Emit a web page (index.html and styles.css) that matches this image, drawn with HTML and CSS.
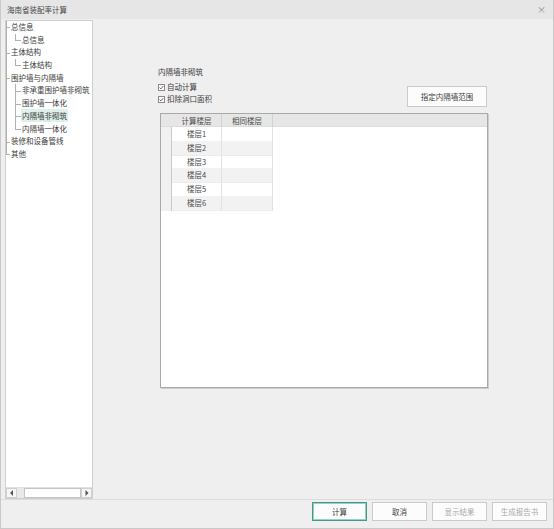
FILE: index.html
```html
<!DOCTYPE html>
<html lang="zh">
<head>
<meta charset="utf-8">
<title>海南省装配率计算</title>
<link rel="stylesheet" href="styles.css">
</head>
<body>
<div class="window">
  <div class="titlebar">
    <span class="title">海南省装配率计算</span>
    <span class="close">×</span>
  </div>
  <div class="content">
    <div class="tree">
      <div class="tree-items">
        <div class="node root">总信息</div>
        <div class="node child last">总信息</div>
        <div class="node root">主体结构</div>
        <div class="node child last">主体结构</div>
        <div class="node root">围护墙与内隔墙</div>
        <div class="node child">非承重围护墙非砌筑</div>
        <div class="node child">围护墙一体化</div>
        <div class="node child"><span class="sel">内隔墙非砌筑</span></div>
        <div class="node child last">内隔墙一体化</div>
        <div class="node root">装修和设备管线</div>
        <div class="node root last">其他</div>
      </div>
      <div class="hscroll">
        <div class="sbtn"><svg width="4" height="6" viewBox="0 0 4 6"><path d="M3 0 L0 3 L3 6 Z" fill="#555"/></svg></div>
        <div class="strack"><div class="sthumb"></div></div>
        <div class="sbtn"><svg width="4" height="6" viewBox="0 0 4 6"><path d="M0.5 0 L3.5 3 L0.5 6 Z" fill="#555"/></svg></div>
      </div>
    </div>
    <div class="pane">
      <div class="group-title">内隔墙非砌筑</div>
      <div class="opts-row">
        <div class="checks">
          <label class="check"><svg class="cb" width="7" height="7" viewBox="0 0 7 7"><rect x="0.5" y="0.5" width="6" height="6" fill="#fff" stroke="#8a8a8a"/><path d="M1.6 3.6 L2.9 4.9 L5.4 2" fill="none" stroke="#444" stroke-width="0.8"/></svg>自动计算</label>
          <label class="check"><svg class="cb" width="7" height="7" viewBox="0 0 7 7"><rect x="0.5" y="0.5" width="6" height="6" fill="#fff" stroke="#8a8a8a"/><path d="M1.6 3.6 L2.9 4.9 L5.4 2" fill="none" stroke="#444" stroke-width="0.8"/></svg>扣除洞口面积</label>
        </div>
        <button class="btn btn-range">指定内隔墙范围</button>
      </div>
      <div class="grid">
        <div class="grow ghead">
          <div class="rh"></div>
          <div class="gc">计算楼层</div>
          <div class="gc">相同楼层</div>
        </div>
        <div class="grow"><div class="rh"></div><div class="gc">楼层1</div><div class="gc"></div></div>
        <div class="grow alt"><div class="rh"></div><div class="gc">楼层2</div><div class="gc"></div></div>
        <div class="grow"><div class="rh"></div><div class="gc">楼层3</div><div class="gc"></div></div>
        <div class="grow alt"><div class="rh"></div><div class="gc">楼层4</div><div class="gc"></div></div>
        <div class="grow"><div class="rh"></div><div class="gc">楼层5</div><div class="gc"></div></div>
        <div class="grow alt"><div class="rh"></div><div class="gc">楼层6</div><div class="gc"></div></div>
      </div>
    </div>
  </div>
  <div class="footer">
    <button class="btn primary">计算</button>
    <button class="btn">取消</button>
    <button class="btn disabled">显示结果</button>
    <button class="btn disabled">生成报告书</button>
  </div>
</div>
</body>
</html>
```

FILE: styles.css
```css
* { box-sizing: border-box; }
html, body { margin: 0; padding: 0; }
body {
  width: 554px;
  height: 529px;
  background: #efefef;
  font-family: "Noto Sans CJK SC", "Noto Sans", sans-serif;
  font-size: 7.5px;
  color: #3c3c3c;
}
.window {
  width: 554px;
  height: 529px;
  border: 1px solid #c9c9c9;
  border-top: none;
  display: flex;
  flex-direction: column;
  background: #efefef;
}
.titlebar {
  height: 19px;
  background: #e6e6e6;
  display: flex;
  align-items: center;
  justify-content: space-between;
  padding: 0 6px 0 6px;
  color: #4a4a4a;
  flex: none;
}
.close { font-size: 9px; color: #8a8a8a; margin-right: 1px; }
.content {
  flex: 1;
  display: flex;
  min-height: 0;
}
.tree {
  width: 88px;
  margin: 1px 0 0 4px;
  border: 1px solid #cfcfcf;
  background: #fff;
  display: flex;
  flex-direction: column;
}
.tree-items { flex: 1; }
.node {
  height: 12.7px;
  line-height: 12.7px;
  white-space: nowrap;
}
.node.root {
  padding-left: 5px;
  background:
    linear-gradient(#b0b0b0, #b0b0b0) 0 0 / 1px 100% no-repeat,
    linear-gradient(#b0b0b0, #b0b0b0) 0 55% / 4px 1px no-repeat;
}
.node.root.last {
  background:
    linear-gradient(#b0b0b0, #b0b0b0) 0 0 / 1px 55% no-repeat,
    linear-gradient(#b0b0b0, #b0b0b0) 0 55% / 4px 1px no-repeat;
}
.node.child {
  padding-left: 16px;
  background:
    linear-gradient(#b0b0b0, #b0b0b0) 0 0 / 1px 100% no-repeat,
    linear-gradient(#b0b0b0, #b0b0b0) 9px 0 / 1px 100% no-repeat,
    linear-gradient(#b0b0b0, #b0b0b0) 9px 55% / 6px 1px no-repeat;
}
.node.child.last {
  background:
    linear-gradient(#b0b0b0, #b0b0b0) 0 0 / 1px 100% no-repeat,
    linear-gradient(#b0b0b0, #b0b0b0) 9px 0 / 1px 55% no-repeat,
    linear-gradient(#b0b0b0, #b0b0b0) 9px 55% / 6px 1px no-repeat;
}
.sel {
  background: #def0ea;
  padding: 1px 1px;
  margin-left: -1px;
}
.hscroll {
  height: 11px;
  display: flex;
  background: #e9e9e9;
  border-top: 1px solid #e2e2e2;
}
.sbtn {
  width: 11px;
  background: #f6f6f6;
  border: 1px solid #cfcfcf;
  display: flex;
  align-items: center;
  justify-content: center;
}
.strack {
  flex: 1;
  padding-left: 7px;
  display: flex;
}
.sthumb {
  width: 57px;
  background: #fff;
  border: 1px solid #c4c4c4;
}
.pane {
  flex: 1;
  padding: 47px 65px 0 65px;
  display: flex;
  flex-direction: column;
}
.group-title {
  line-height: 12px;
  margin-bottom: 3px;
}
.opts-row {
  display: flex;
  justify-content: space-between;
  align-items: flex-start;
}
.checks { display: flex; flex-direction: column; }
.check {
  height: 12px;
  line-height: 12px;
  display: flex;
  align-items: center;
  white-space: nowrap;
}
.cb { margin-right: 2px; flex: none; }
.btn {
  font-family: inherit;
  font-size: 7.5px;
  color: #3c3c3c;
  background: #fcfcfc;
  border: 1px solid #cacaca;
  padding: 0;
  margin: 0;
  width: 55px;
  height: 19px;
}
.btn-range {
  width: 80px;
  height: 21px;
  margin-top: 5px;
  margin-right: 1px;
}
.grid {
  margin-top: 6px;
  margin-left: 2px;
  height: 275px;
  background: #fff;
  border: 1px solid #a9a9a9;
  box-shadow: 1px 1px 0 #cdcdcd;
}
.grow {
  display: grid;
  grid-template-columns: 11px 50px 51px;
  height: 13.8px;
  line-height: 13.8px;
  text-align: center;
}
.grow.ghead {
  height: 13px;
  line-height: 13px;
  background: #e6e6e6;
  border-bottom: 1px solid #dcdcdc;
}
.grow .rh {
  background: #f1f1f1;
  border-right: 1px solid #c9c9c9;
}
.grow.ghead .rh { background: transparent; border-right: none; }
.grow .gc {
  border-right: 1px solid #e2e2e2;
  border-bottom: 1px solid #ececec;
  color: #4a4a4a;
}
.grow.ghead .gc { border-right: 1px solid #d2d2d2; border-bottom: none; }
.grow.alt .gc { background: #f2f2f2; }
.footer {
  height: 29px;
  flex: none;
  border-top: 1px solid #dcdcdc;
  display: flex;
  justify-content: flex-end;
  gap: 5px;
  padding: 2px 6px 0 0;
}
.btn.primary {
  border: 1px solid #3f9c8b;
  box-shadow: inset 0 0 0 1px #9ccfc4;
}
.btn.disabled { color: #a9a9a9; }
```
